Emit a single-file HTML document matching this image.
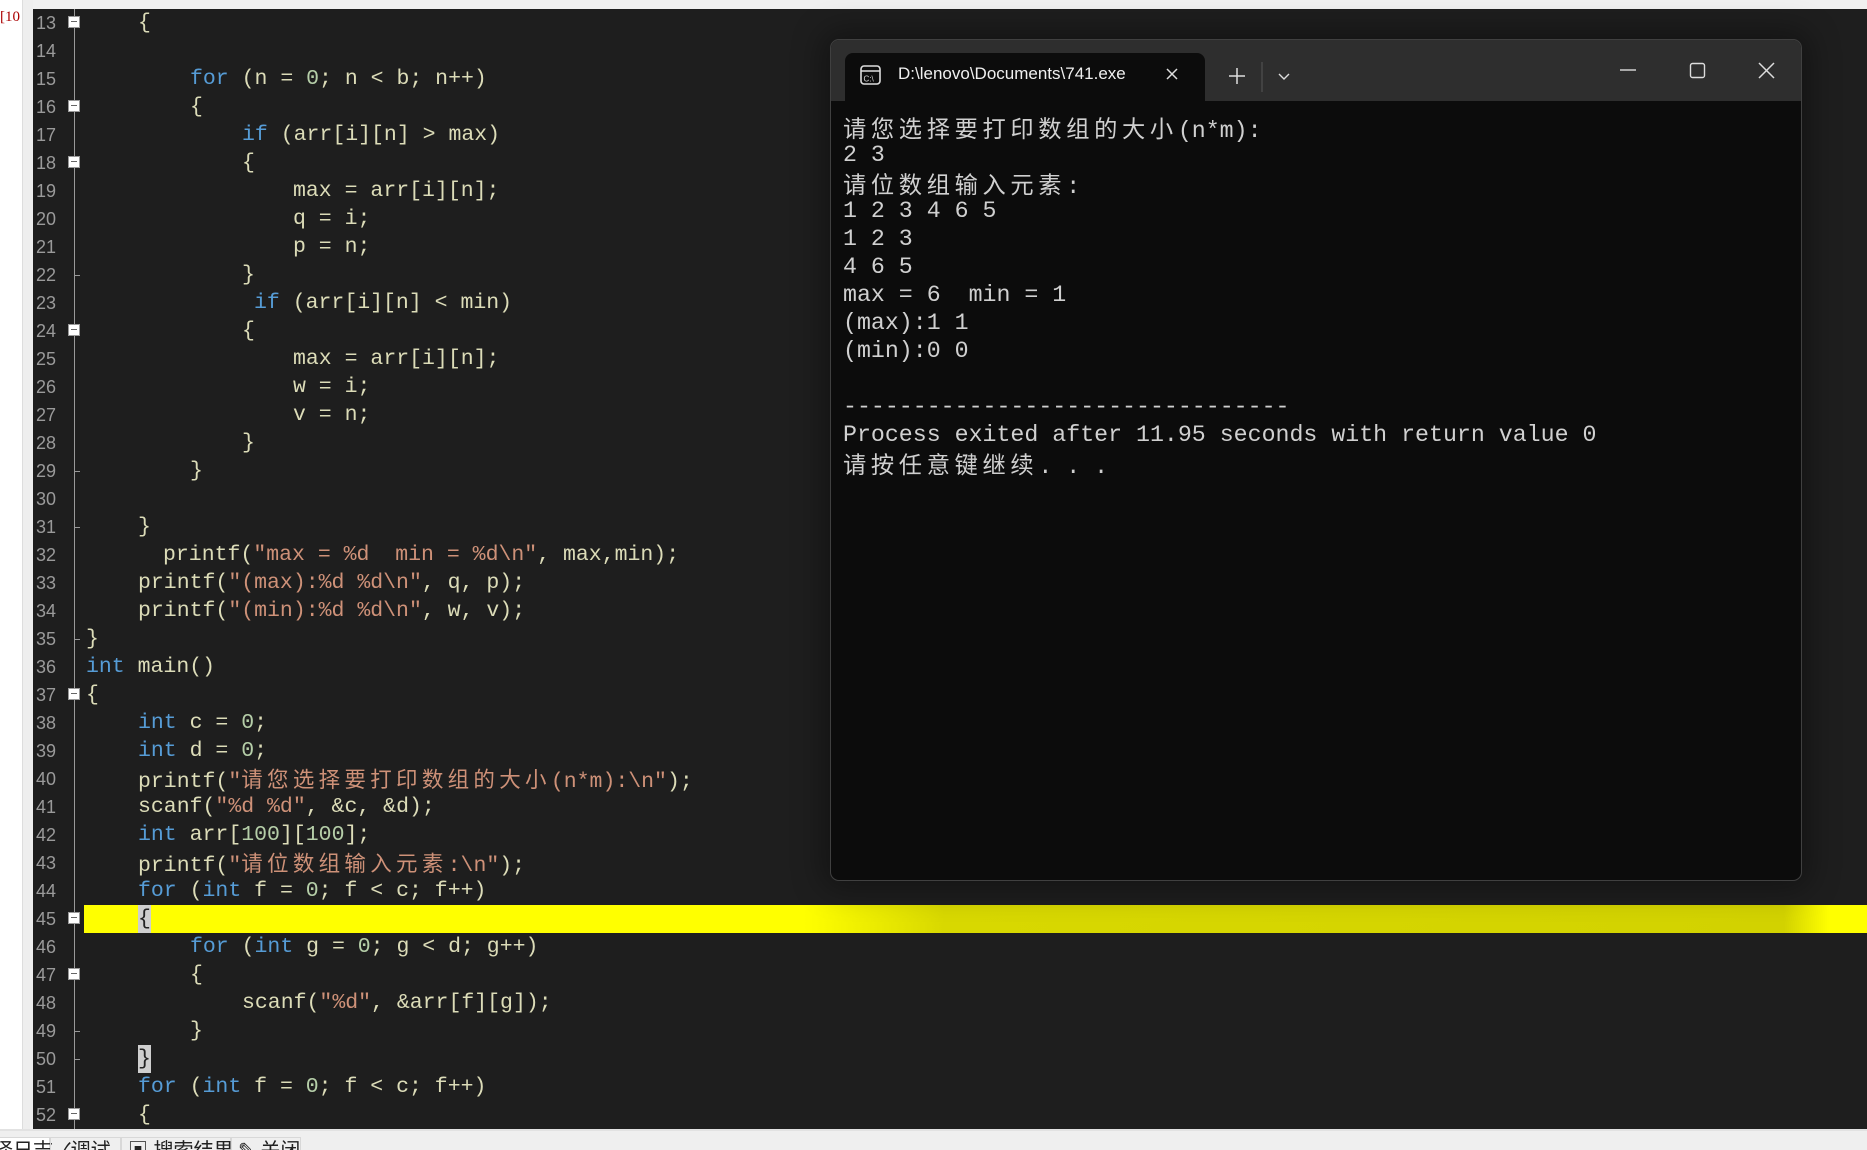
<!DOCTYPE html>
<html style="width:1867px;height:1150px;overflow:hidden"><head><meta charset="utf-8"><style>
*{margin:0;padding:0;box-sizing:border-box}
body{width:1867px;height:1150px;overflow:hidden;background:#1e1e1e;position:relative;font-family:"Liberation Mono","Noto Sans CJK SC",monospace}
.l{position:absolute;font-size:21.5px;line-height:28px;height:28px;white-space:pre;color:#dcdcb8}
.c{font-family:"Noto Sans CJK SC",sans-serif}
.l .c{letter-spacing:4.3px}
.n{position:absolute;left:36px;width:28px;font-size:18px;line-height:28px;color:#9a9a9a;font-family:"Liberation Sans",sans-serif}
.k{color:#569cd6}.s{color:#ce9178}.d{color:#b5cea8}
.fb{position:absolute;left:68px;width:12px;height:12px;background:#fff;border:1px solid #999}
.fb:after{content:"";position:absolute;left:2px;right:2px;top:4px;height:1px;background:#666}
.tk{position:absolute;left:74px;width:6px;height:1px;background:#999}
.t{position:absolute;left:843px;font-size:23.25px;line-height:28px;height:28px;white-space:pre;color:#d0d0d0;font-family:"Liberation Mono","Noto Sans CJK SC",monospace}
.t .c{letter-spacing:4.65px}
.bt{position:absolute;height:30px;border:1px solid #d8d8d8;border-bottom:none;font:20px 'Liberation Sans','Noto Sans CJK SC',sans-serif;color:#222;white-space:nowrap;padding-left:6px;line-height:26px}
</style></head><body>
<div style="position:absolute;left:0;top:0;width:1867px;height:9px;background:#f0f0f0"></div>
<div style="position:absolute;left:0;top:0;width:22px;height:1129px;background:#fff"></div>
<div style="position:absolute;left:22px;top:0;width:11px;height:1129px;background:#eeeeee;border-left:1px solid #ddd"></div>
<div style="position:absolute;left:0;top:9px;font:15px 'Liberation Serif',serif;color:#a00">[10</div>
<div style="position:absolute;left:0;top:1129px;width:1867px;height:21px;background:#efefef;border-top:2px solid #e2e2e2"></div>
<div style="position:absolute;left:0;top:1129px;width:1867px;height:21px;overflow:hidden">
<div class="bt" style="left:-8px;width:58px;top:8px;background:#fff;padding-left:0">译日志</div>
<div class="bt" style="left:50px;width:71px;top:8px">✓调试</div>
<div class="bt" style="left:121px;width:110px;top:8px">▣ 搜索结果</div>
<div class="bt" style="left:231px;width:70px;top:8px">✎ 关闭</div>
</div>
<div style="position:absolute;left:74px;top:9px;width:1px;height:1120px;background:#999"></div>
<div style="position:absolute;left:84px;top:905px;width:1783px;height:28px;background:linear-gradient(90deg,#ffff00 0,#ffff00 720px,#d8d800 860px,#d2d200 1700px,#ffff00 1745px)"></div>
<div class="n" style="top:9px">13</div><div class="fb" style="top:16px"></div><div class="l" style="top:9px;left:138px">{</div>
<div class="n" style="top:37px">14</div>
<div class="n" style="top:65px">15</div><div class="l" style="top:65px;left:190px"><span class="k">for</span> (n = <span class="d">0</span>; n &lt; b; n++)</div>
<div class="n" style="top:93px">16</div><div class="fb" style="top:100px"></div><div class="l" style="top:93px;left:190px">{</div>
<div class="n" style="top:121px">17</div><div class="l" style="top:121px;left:242px"><span class="k">if</span> (arr[i][n] &gt; max)</div>
<div class="n" style="top:149px">18</div><div class="fb" style="top:156px"></div><div class="l" style="top:149px;left:242px">{</div>
<div class="n" style="top:177px">19</div><div class="l" style="top:177px;left:293px">max = arr[i][n];</div>
<div class="n" style="top:205px">20</div><div class="l" style="top:205px;left:293px">q = i;</div>
<div class="n" style="top:233px">21</div><div class="l" style="top:233px;left:293px">p = n;</div>
<div class="n" style="top:261px">22</div><div class="tk" style="top:275px"></div><div class="l" style="top:261px;left:242px">}</div>
<div class="n" style="top:289px">23</div><div class="l" style="top:289px;left:254px"><span class="k">if</span> (arr[i][n] &lt; min)</div>
<div class="n" style="top:317px">24</div><div class="fb" style="top:324px"></div><div class="l" style="top:317px;left:242px">{</div>
<div class="n" style="top:345px">25</div><div class="l" style="top:345px;left:293px">max = arr[i][n];</div>
<div class="n" style="top:373px">26</div><div class="l" style="top:373px;left:293px">w = i;</div>
<div class="n" style="top:401px">27</div><div class="l" style="top:401px;left:293px">v = n;</div>
<div class="n" style="top:429px">28</div><div class="l" style="top:429px;left:242px">}</div>
<div class="n" style="top:457px">29</div><div class="tk" style="top:471px"></div><div class="l" style="top:457px;left:190px">}</div>
<div class="n" style="top:485px">30</div>
<div class="n" style="top:513px">31</div><div class="tk" style="top:527px"></div><div class="l" style="top:513px;left:138px">}</div>
<div class="n" style="top:541px">32</div><div class="l" style="top:541px;left:163px">printf(<span class="s">"max = %d  min = %d\n"</span>, max,min);</div>
<div class="n" style="top:569px">33</div><div class="l" style="top:569px;left:138px">printf(<span class="s">"(max):%d %d\n"</span>, q, p);</div>
<div class="n" style="top:597px">34</div><div class="l" style="top:597px;left:138px">printf(<span class="s">"(min):%d %d\n"</span>, w, v);</div>
<div class="n" style="top:625px">35</div><div class="tk" style="top:639px"></div><div class="l" style="top:625px;left:86px">}</div>
<div class="n" style="top:653px">36</div><div class="l" style="top:653px;left:86px"><span class="k">int</span> main()</div>
<div class="n" style="top:681px">37</div><div class="fb" style="top:688px"></div><div class="l" style="top:681px;left:86px">{</div>
<div class="n" style="top:709px">38</div><div class="l" style="top:709px;left:138px"><span class="k">int</span> c = <span class="d">0</span>;</div>
<div class="n" style="top:737px">39</div><div class="l" style="top:737px;left:138px"><span class="k">int</span> d = <span class="d">0</span>;</div>
<div class="n" style="top:765px">40</div><div class="l" style="top:765px;left:138px">printf(<span class="s">"<span class="c">请您选择要打印数组的大小</span>(n*m):\n"</span>);</div>
<div class="n" style="top:793px">41</div><div class="l" style="top:793px;left:138px">scanf(<span class="s">"%d %d"</span>, &amp;c, &amp;d);</div>
<div class="n" style="top:821px">42</div><div class="l" style="top:821px;left:138px"><span class="k">int</span> arr[<span class="d">100</span>][<span class="d">100</span>];</div>
<div class="n" style="top:849px">43</div><div class="l" style="top:849px;left:138px">printf(<span class="s">"<span class="c">请位数组输入元素</span>:\n"</span>);</div>
<div class="n" style="top:877px">44</div><div class="l" style="top:877px;left:138px"><span class="k">for</span> (<span class="k">int</span> f = <span class="d">0</span>; f &lt; c; f++)</div>
<div class="n" style="top:905px">45</div><div class="fb" style="top:912px"></div><div class="l" style="top:905px;left:138px;color:#222;background:#cfcfcf">{</div>
<div class="n" style="top:933px">46</div><div class="l" style="top:933px;left:190px"><span class="k">for</span> (<span class="k">int</span> g = <span class="d">0</span>; g &lt; d; g++)</div>
<div class="n" style="top:961px">47</div><div class="fb" style="top:968px"></div><div class="l" style="top:961px;left:190px">{</div>
<div class="n" style="top:989px">48</div><div class="l" style="top:989px;left:242px">scanf(<span class="s">"%d"</span>, &amp;arr[f][g]);</div>
<div class="n" style="top:1017px">49</div><div class="tk" style="top:1031px"></div><div class="l" style="top:1017px;left:190px">}</div>
<div class="n" style="top:1045px">50</div><div class="tk" style="top:1059px"></div><div class="l" style="top:1045px;left:138px;color:#222;background:#cfcfcf">}</div>
<div class="n" style="top:1073px">51</div><div class="l" style="top:1073px;left:138px"><span class="k">for</span> (<span class="k">int</span> f = <span class="d">0</span>; f &lt; c; f++)</div>
<div class="n" style="top:1101px">52</div><div class="fb" style="top:1108px"></div><div class="l" style="top:1101px;left:138px">{</div>

<div style="position:absolute;left:830px;top:39px;width:972px;height:842px;background:#0c0c0c;border:1px solid #404040;border-radius:9px;overflow:hidden;box-shadow:0 0 30px 8px rgba(0,0,0,0.35)">
  <div style="position:absolute;left:0;top:0;width:100%;height:61px;background:#2e2e2e"></div>
  <div style="position:absolute;left:14px;top:13px;width:360px;height:50px;background:#0c0c0c;border-radius:8px 8px 0 0"></div>
</div>
<svg style="position:absolute;left:0;top:0" width="1867" height="1150">
  <rect x="861" y="66" width="19" height="18" rx="3" fill="none" stroke="#ddd" stroke-width="1.6"/>
  <line x1="861" y1="71" x2="880" y2="71" stroke="#ddd" stroke-width="1.4"/>
  <text x="863.5" y="81.5" font-family="Liberation Sans" font-size="8" fill="#ddd">C:\</text>
  <path d="M1167 69l10 10M1177 69l-10 10" stroke="#ddd" stroke-width="1.5"/>
  <path d="M1237 68v16M1229 76h16" stroke="#ddd" stroke-width="1.5"/>
  <line x1="1262" y1="62" x2="1262" y2="92" stroke="#555" stroke-width="1"/>
  <path d="M1279 74l5 5 5-5" stroke="#ddd" stroke-width="1.4" fill="none"/>
  <line x1="1620" y1="70" x2="1636" y2="70" stroke="#ddd" stroke-width="1.4"/>
  <rect x="1690.5" y="63.5" width="14" height="14" rx="2" fill="none" stroke="#ddd" stroke-width="1.4"/>
  <path d="M1759 63l15 15M1774 63l-15 15" stroke="#ddd" stroke-width="1.5"/>
</svg>
<div style="position:absolute;left:898px;top:64px;width:245px;overflow:hidden;white-space:nowrap;font:17px 'Liberation Sans',sans-serif;color:#f0f0f0">D:\lenovo\Documents\741.exe</div>
<div class="t" style="top:113px"><span class="c">请您选择要打印数组的大小</span>(n*m):</div>
<div class="t" style="top:141px">2 3</div>
<div class="t" style="top:169px"><span class="c">请位数组输入元素</span>:</div>
<div class="t" style="top:197px">1 2 3 4 6 5</div>
<div class="t" style="top:225px">1 2 3</div>
<div class="t" style="top:253px">4 6 5</div>
<div class="t" style="top:281px">max = 6  min = 1</div>
<div class="t" style="top:309px">(max):1 1</div>
<div class="t" style="top:337px">(min):0 0</div>
<div class="t" style="top:393px">--------------------------------</div>
<div class="t" style="top:421px">Process exited after 11.95 seconds with return value 0</div>
<div class="t" style="top:449px"><span class="c">请按任意键继续</span>. . .</div>
</body></html>
